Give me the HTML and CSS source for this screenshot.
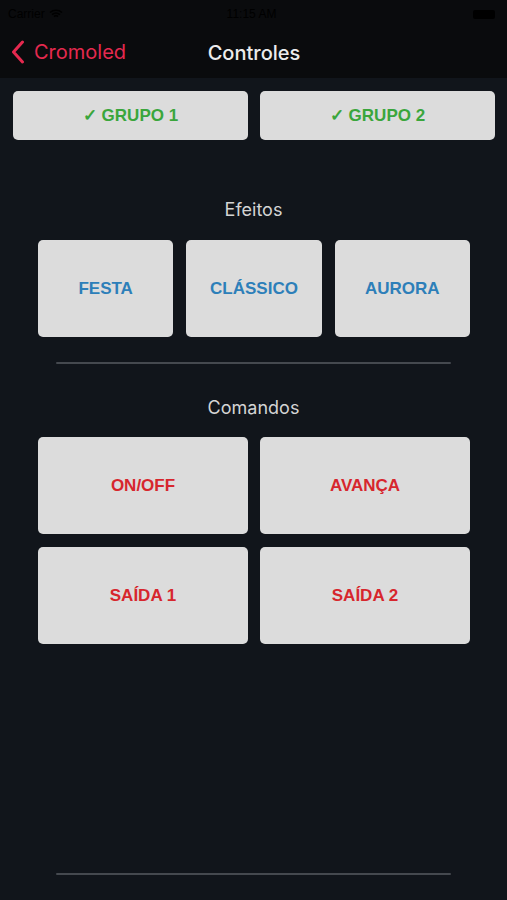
FILE: index.html
```html
<!DOCTYPE html>
<html>
	<head>
		<meta charset="UTF-8">
		<title>Controles</title>
		<link rel="stylesheet" href="styles.css">
	</head>
	<body>
		<div class="status">
			<div class="status-left">
				<span>Carrier</span>
				<svg width="14" height="10" viewBox="0 0 14 10"><path d="M1 3.5a9 9 0 0 1 12 0M3 5.6a6 6 0 0 1 8 0M5 7.6a3 3 0 0 1 4 0" stroke="#000" stroke-width="1.6" fill="none"/></svg>
			</div>
			<div class="status-time">11:15 AM</div>
			<div class="status-right"><span class="battery"></span></div>
		</div>
		<div class="nav">
			<a class="back">
				<svg width="14" height="24" viewBox="0 0 14 24"><path d="M11.5 2 L2.5 12 L11.5 22" stroke="#e5294f" stroke-width="3" fill="none" stroke-linecap="round" stroke-linejoin="round"/></svg>
				<span>Cromoled</span>
			</a>
			<div class="title">Controles</div>
		</div>
		<div class="content">
			<div class="groups">
				<div class="btn green">✓ GRUPO 1</div>
				<div class="btn green">✓ GRUPO 2</div>
			</div>
			<h2 class="label label-efeitos">Efeitos</h2>
			<div class="grid three">
				<div class="btn blue">FESTA</div>
				<div class="btn blue">CLÁSSICO</div>
				<div class="btn blue">AURORA</div>
			</div>
			<div class="line"></div>
			<h2 class="label label-comandos">Comandos</h2>
			<div class="grid two">
				<div class="btn red">ON/OFF</div>
				<div class="btn red">AVANÇA</div>
				<div class="btn red">SAÍDA 1</div>
				<div class="btn red">SAÍDA 2</div>
			</div>
			<div class="line bottom"></div>
		</div>
	</body>
</html>
```
FILE: styles.css
```css
*{
	margin: 0;
	padding: 0;
	box-sizing: border-box;
}
body{
	width: 507px;
	height: 900px;
	background: #11151b;
	font-family: "Liberation Sans", Arial, sans-serif;
	overflow: hidden;
}
.status{
	height: 28px;
	background: #0a0b0d;
	display: flex;
	align-items: center;
	justify-content: space-between;
	padding: 0 12px 0 8px;
	color: #000;
	font-size: 12px;
}
.status-left{
	display: flex;
	align-items: center;
	gap: 4px;
	width: 100px;
}
.status-right{
	width: 100px;
	display: flex;
	justify-content: flex-end;
}
.battery{
	width: 22px;
	height: 9px;
	background: #000;
	border-radius: 2px;
}
.nav{
	height: 50px;
	background: #0a0b0d;
	position: relative;
	display: flex;
	align-items: center;
	justify-content: center;
}
.back{
	position: absolute;
	left: 11px;
	top: 12px;
	display: flex;
	align-items: center;
	gap: 9px;
	color: #e5294f;
	font-family: Inter, "Liberation Sans", sans-serif;
	font-size: 20px;
}
.title{
	color: #ececec;
	font-family: Inter, "Liberation Sans", sans-serif;
	font-size: 20px;
	font-weight: 500;
	margin-left: 1px;
}
.content{
	padding-top: 13px;
}
.groups{
	display: flex;
	gap: 12px;
	padding: 0 12px 0 13px;
}
.groups .btn{
	flex: 1;
	height: 49px;
}
.btn{
	background: #dcdcdc;
	border-radius: 5px;
	display: flex;
	align-items: center;
	justify-content: center;
	font-size: 17px;
	font-weight: bold;
}
.green{ color: #3aa63c; }
.blue{ color: #2d7fb9; }
.red{ color: #d7262d; }
.label{
	text-align: center;
	color: #d4d4d4;
	font-family: Inter, "Liberation Sans", sans-serif;
	font-size: 18px;
	font-weight: normal;
	line-height: 22px;
}
.label-efeitos{
	margin: 59px 0 19px;
}
.label-comandos{
	margin: 33px 0 18px;
}
.grid{
	display: grid;
	padding: 0 37px 0 38px;
}
.grid .btn{
	height: 97px;
}
.three{
	grid-template-columns: repeat(3, 1fr);
	column-gap: 13px;
}
.two{
	grid-template-columns: repeat(2, 1fr);
	column-gap: 12px;
	row-gap: 13px;
}
.line{
	height: 2px;
	background: #45494f;
	margin: 25px 56px 0;
	border-radius: 1px;
}
.line.bottom{
	margin-top: 229px;
}
```
